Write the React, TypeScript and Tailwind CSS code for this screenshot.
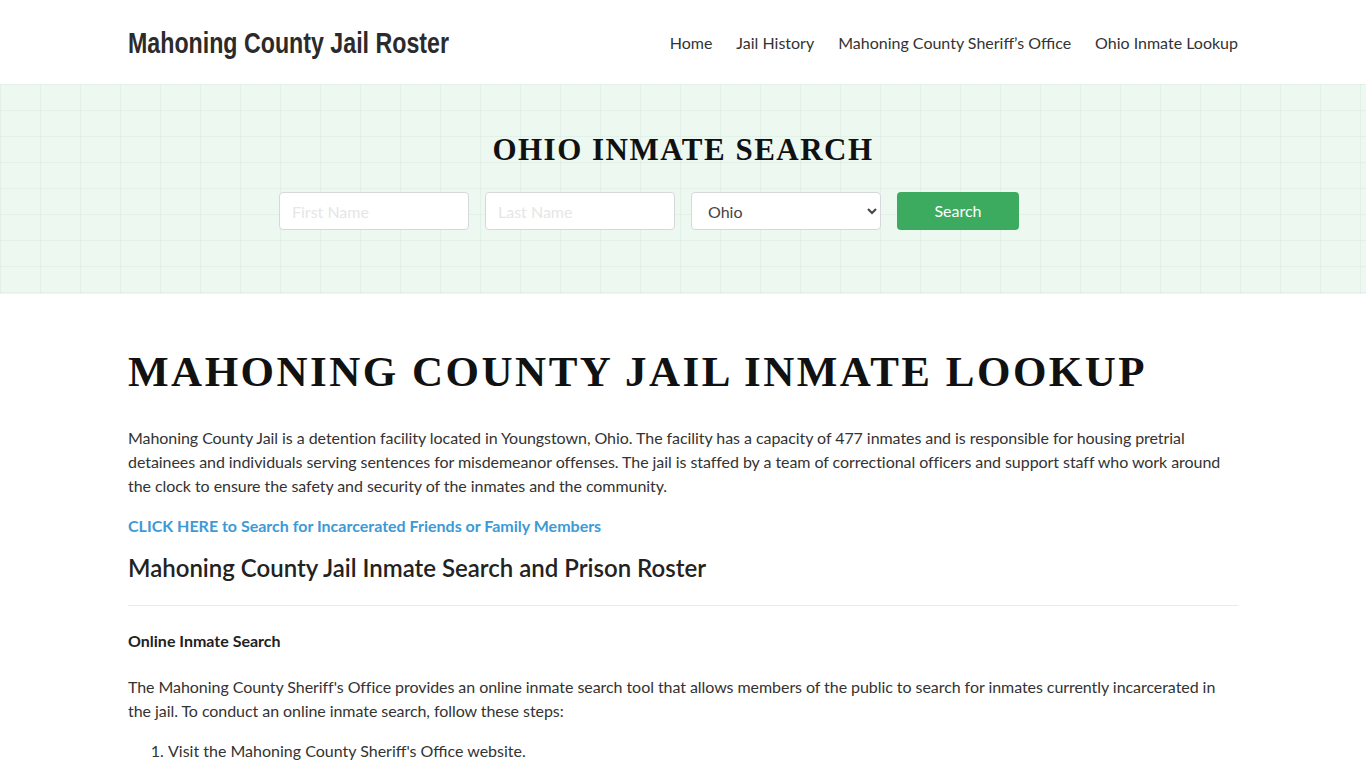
import { useState } from 'react';

const navLinks = ['Home', 'Jail History', 'Mahoning County Sheriff’s Office', 'Ohio Inmate Lookup'];

export default function App() {
  const [first, setFirst] = useState('');
  const [last, setLast] = useState('');

  return (
    <div className="min-h-screen bg-white text-[#333] font-['Lato','Liberation_Sans',sans-serif]">
      {/* header */}
      <header className="h-[84px] bg-white">
        <div className="max-w-[1110px] mx-auto h-full flex items-center justify-between">
          <a href="#" className="inline-block origin-left scale-x-[0.8] pt-[3px] text-[29px] font-bold text-[#2b2b2b] font-['Liberation_Sans',sans-serif] whitespace-nowrap">
            Mahoning County Jail Roster
          </a>
          <nav className="flex gap-6 text-[16px] text-[#333] pt-[2px]">
            {navLinks.map((l) => (
              <a key={l} href="#" className="hover:underline">{l}</a>
            ))}
          </nav>
        </div>
      </header>

      {/* search hero */}
      <section className="h-[210px] bg-[#edf8f1] bg-[linear-gradient(to_right,rgba(200,225,210,0.28)_1px,transparent_1px),linear-gradient(to_bottom,rgba(200,225,210,0.28)_1px,transparent_1px)] bg-[size:40px_26px] flex flex-col items-center pt-[50px]">
        <h2 className="text-[31px] font-bold tracking-[1.5px] text-[#111] font-['Liberation_Serif',serif] leading-none">
          OHIO INMATE SEARCH
        </h2>
        <form className="flex gap-4 mt-[27px] mr-[68px]" onSubmit={(e) => e.preventDefault()}>
          <input
            value={first}
            onChange={(e) => setFirst(e.target.value)}
            placeholder="First Name"
            className="w-[190px] h-[38px] px-3 bg-white border border-[#d5d9dc] rounded text-[16px] placeholder:text-[#e6e6e6] outline-none"
          />
          <input
            value={last}
            onChange={(e) => setLast(e.target.value)}
            placeholder="Last Name"
            className="w-[190px] h-[38px] px-3 bg-white border border-[#d5d9dc] rounded text-[16px] placeholder:text-[#e6e6e6] outline-none"
          />
          <select className="w-[190px] h-[38px] pl-3 pr-2 bg-white border border-[#d5d9dc] rounded text-[16px] text-[#444]">
            <option>Ohio</option>
          </select>
          <button className="w-[122px] h-[38px] bg-[#3cab60] text-white rounded text-[16px]">Search</button>
        </form>
      </section>

      {/* content */}
      <main className="max-w-[1110px] mx-auto pt-[52px]">
        <h1 className="text-[43px] font-bold tracking-[2.5px] text-[#111] font-['Liberation_Serif',serif] leading-[52px]">
          MAHONING COUNTY JAIL INMATE LOOKUP
        </h1>
        <p className="mt-[28px] text-[16px] leading-6 tracking-[-0.06px] text-[#333]">
          Mahoning County Jail is a detention facility located in Youngstown, Ohio. The facility has a capacity of 477 inmates and is responsible for housing pretrial detainees and individuals serving sentences for misdemeanor offenses. The jail is staffed by a team of correctional officers and support staff who work around the clock to ensure the safety and security of the inmates and the community.
        </p>
        <a href="#" className="block mt-4 text-[16px] leading-6 font-bold text-[#3d9ad6]">
          CLICK HERE to Search for Incarcerated Friends or Family Members
        </a>
        <h2 className="mt-[15px] text-[24px] leading-[30px] font-semibold text-[#222]">
          Mahoning County Jail Inmate Search and Prison Roster
        </h2>
        <hr className="mt-[22px] border-t border-[#ebebeb]" />
        <h3 className="mt-[23px] text-[16px] leading-6 font-bold text-[#222]">Online Inmate Search</h3>
        <p className="mt-[22px] text-[16px] leading-6 tracking-[-0.06px] text-[#333]">
          The Mahoning County Sheriff's Office provides an online inmate search tool that allows members of the public to search for inmates currently incarcerated in the jail. To conduct an online inmate search, follow these steps:
        </p>
        <ol className="mt-4 pl-10 list-decimal text-[16px] leading-6 text-[#333]">
          <li>Visit the Mahoning County Sheriff's Office website.</li>
          <li>Click on the "Inmate Search" link.</li>
          <li>Enter the inmate's name or booking number.</li>
        </ol>
      </main>
    </div>
  );
}
